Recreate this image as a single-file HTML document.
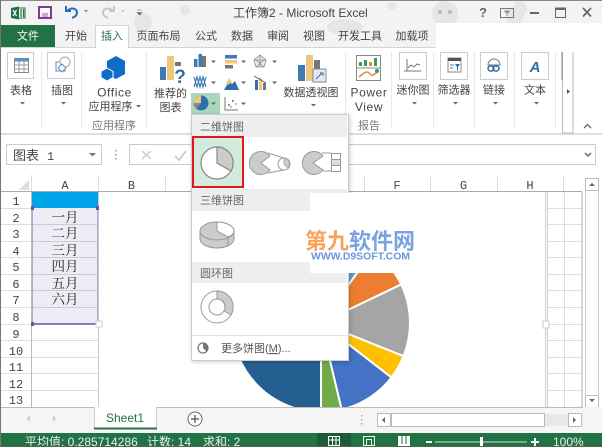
<!DOCTYPE html>
<html><head><meta charset="utf-8"><style>
html,body{margin:0;padding:0;background:#fff;overflow:hidden}
svg{display:block;font-family:"Liberation Sans","Noto Sans CJK SC",sans-serif;filter:blur(.35px)}
.t{font-size:11px;fill:#444;text-anchor:middle}
.l{font-size:12px;fill:#444;text-anchor:middle;letter-spacing:.6px}
.s{font-family:"Noto Serif CJK SC","Liberation Serif",serif;font-size:13.500px;fill:#222;text-anchor:middle}
.m{font-family:"Liberation Mono",monospace;font-size:12px;fill:#444;text-anchor:middle}
.h{font-size:11px;fill:#666}
.g{fill:#666}
</style></head><body>
<svg width="602" height="447" viewBox="0 0 602 447" xmlns="http://www.w3.org/2000/svg">
<rect width="602" height="447" fill="#fff"/>
<!-- title bar -->
<rect width="602" height="47" fill="#f3f3f3"/>
<g fill="#e6e6e6">
<circle cx="143" cy="22" r="9"/><circle cx="185" cy="10" r="5"/><ellipse cx="445" cy="14" rx="13" ry="13"/><ellipse cx="345" cy="27" rx="18" ry="8"/><circle cx="520" cy="8" r="7"/><circle cx="515" cy="16" r="9"/><circle cx="392" cy="6" r="4"/><circle cx="580" cy="35" r="6"/><circle cx="277" cy="36" r="5"/>
</g>
<g fill="#bbb"><circle cx="440" cy="12" r="2"/><circle cx="450" cy="12" r="2"/></g>
<rect x="436" y="23" width="166" height="24" fill="#fff"/>
<!-- QAT -->
<rect x="16" y="8" width="9" height="10" fill="#fff" stroke="#217346"/>
<path d="M11 8l8-1.500v13l-8-1.500z" fill="#217346"/>
<path d="M13 10l3.500 6M16.500 10l-3.500 6" stroke="#fff" stroke-width="1.200"/>
<path d="M21 9v8M23.500 9v8" stroke="#217346" stroke-width="1.300"/>
<rect x="39" y="7" width="12" height="11" fill="none" stroke="#7e3b92" stroke-width="2"/>
<rect x="41" y="8" width="8" height="3.500" fill="#fff"/><rect x="42" y="13" width="6" height="4" fill="#c9a9d3"/>
<path d="M66 6v5h5M67 11c4-4 10-3 10 2 0 3-3 4-5 5" fill="none" stroke="#2a6fb5" stroke-width="2"/>
<path d="M84 10h4l-2 2.500z" fill="#888"/>
<path d="M114 6v5h-5M113 11c-4-4-10-3-10 2 0 3 3 4 5 5" fill="none" stroke="#c4c4c4" stroke-width="1.800"/>
<path d="M121 10h4l-2 2.500z" fill="#ccc"/>
<path d="M137 10h5M137 12.500h5l-2.500 2.500z" fill="#666" stroke="#666" stroke-width=".6"/>
<text x="233" y="17" font-size="12" fill="#444">工作簿2 - Microsoft Excel</text>
<!-- window controls -->
<text x="479" y="17" font-size="13" fill="#666" font-weight="bold">?</text>
<rect x="500.500" y="8.500" width="13" height="9" fill="none" stroke="#777"/><path d="M504 11h6M507 11v5M505 13l2-2 2 2" fill="none" stroke="#777" stroke-width=".8"/>
<rect x="530" y="12" width="9" height="2" fill="#666"/>
<rect x="555.500" y="8.500" width="10" height="9" fill="none" stroke="#666"/><rect x="555" y="7.500" width="11" height="2.500" fill="#666"/>
<path d="M583 8l8 8.500M591 8l-8 8.500" stroke="#666" stroke-width="1.700"/>
<!-- tabs -->
<rect x="1" y="25" width="54" height="23" fill="#217346"/>
<text x="28" y="39.500" class="t" style="fill:#fff">文件</text>
<line x1="0" y1="47.500" x2="436" y2="47.500" stroke="#d4d4d4"/>
<path d="M95.500 48V25.500h33V48" fill="#fff" stroke="#d4d4d4"/>
<text x="76" y="39.500" class="t">开始</text>
<text x="112" y="39.500" class="t" style="fill:#217346">插入</text>
<text x="158.500" y="39.500" class="t">页面布局</text>
<text x="206" y="39.500" class="t">公式</text>
<text x="242" y="39.500" class="t">数据</text>
<text x="278" y="39.500" class="t">审阅</text>
<text x="314" y="39.500" class="t">视图</text>
<text x="360" y="39.500" class="t">开发工具</text>
<text x="412" y="39.500" class="t">加载项</text>
<!-- ribbon separators -->
<g stroke="#e8e8e8"><path d="M41.500 52v76M81.500 52v76M146.500 52v76M345.500 52v76M391.500 52v76M433.500 52v76M474.500 52v76M514.500 52v76M555.500 52v76"/></g>
<line x1="0" y1="134" x2="602" y2="134" stroke="#d4d4d4" stroke-width="1.500"/>
<!-- buttons -->
<g fill="#fff" stroke="#ccc">
<rect x="7.500" y="52.500" width="26" height="26"/><rect x="47.500" y="52.500" width="27" height="26"/>
<rect x="399.500" y="52.500" width="27" height="27"/><rect x="440.500" y="52.500" width="27" height="27"/><rect x="480.500" y="52.500" width="27" height="27"/><rect x="521.500" y="52.500" width="27" height="27"/>
</g>
<!-- table icon -->
<rect x="14.500" y="58.500" width="14" height="14" fill="#fff" stroke="#888"/><rect x="14" y="58" width="15" height="3.500" fill="#5b8fc7"/>
<path d="M14 65h15M14 69h15M19 61v11M24 61v11" stroke="#999"/>
<!-- illustration icon -->
<path d="M56 62h9v9h-9z" fill="#fff" stroke="#5b8fc7"/><circle cx="65" cy="62" r="5" fill="#fff" stroke="#c97"/><path d="M58 68l4-4 4 4-4 4z" fill="#fff" stroke="#5b8fc7"/>
<!-- office hex -->
<path d="M116 56l9 5v13l-9 5-9-5V61z" fill="#0f6cc7"/>
<path d="M107 68l6 3.500v6l-6 3.500-6-3.500v-6z" fill="#0f6cc7" stroke="#fff"/>
<!-- recommended -->
<rect x="160" y="67" width="6" height="13" fill="#3f7ab5"/><rect x="167" y="56" width="7" height="24" fill="#eec77c"/><rect x="175" y="62" width="6" height="4" fill="#777"/>
<text x="180" y="83" font-size="19" font-weight="bold" fill="#2f6ea8" text-anchor="middle">?</text>
<!-- small chart icons -->
<g>
<rect x="194" y="59" width="3.500" height="8" fill="#3f7ab5"/><rect x="198.500" y="54" width="3.500" height="13" fill="#3f7ab5"/><rect x="202" y="56" width="4" height="11" fill="#777"/>
<rect x="225" y="55" width="12" height="3.500" fill="#3f7ab5"/><rect x="225" y="60" width="12" height="3.500" fill="#eec77c"/><rect x="225" y="65" width="8" height="3.500" fill="#777"/>
<path d="M260 55l6 5-2 7h-8l-2-7zM260 55v12M254 60h12M256 67l8-7M264 67l-8-7" fill="#eee" stroke="#888" stroke-width=".8"/>
<path d="M194 87l3-10 3 10 3-10 3 10M194 77l3 10 3-10 3 10 3-10" fill="none" stroke="#3f7ab5" stroke-width="1.200"/>
<path d="M224 90l5-9 3 3 3-3 4 9z" fill="#2f6ea8"/><path d="M226 84l3-6 3 4-4 3z" fill="#eec77c"/>
<rect x="255" y="80" width="3" height="10" fill="#2f6ea8"/><rect x="259" y="78" width="3" height="12" fill="#eec77c"/><rect x="263" y="83" width="3" height="7" fill="#777"/><path d="M254 76l12 7" stroke="#555"/>
<rect x="191" y="93" width="29" height="21" fill="#a9d8bd"/>
<circle cx="201" cy="103" r="7.500" fill="#2f6ea8"/><path d="M201 103v-7.500a7.500 7.500 0 0 0-7.500 7.500z" fill="#eec77c"/><path d="M201 103h-7.500a7.500 7.500 0 0 0 3 6z" fill="#888"/>
<path d="M225 97v13h13" fill="none" stroke="#777"/>
<g fill="#3f7ab5"><circle cx="229" cy="105" r="1"/><circle cx="233" cy="101" r="1"/></g><g fill="#d9a53f"><circle cx="231" cy="107" r="1"/><circle cx="236" cy="104" r="1"/></g>
</g>
<!-- arrows -->
<g class="g">
<path d="M211 60.500h5l-2.500 2.500zM241 60.500h5l-2.500 2.500zM272 60.500h5l-2.500 2.500zM211 81.500h5l-2.500 2.500zM241 81.500h5l-2.500 2.500zM272 81.500h5l-2.500 2.500zM211 102.500h5l-2.500 2.500zM241 102.500h5l-2.500 2.500z"/>
<path d="M20 102h5l-2.500 2.500zM61 102h5l-2.500 2.500zM136 105h5l-2.500 2.500zM311 104h5l-2.500 2.500zM412 102h5l-2.500 2.500zM453 102h5l-2.500 2.500zM493 102h5l-2.500 2.500zM534 102h5l-2.500 2.500z"/>
</g>
<!-- labels -->
<text x="21" y="94" class="t">表格</text>
<text x="62" y="94" class="t">插图</text>
<text x="114.500" y="96.500" class="l">Office</text>
<text x="110.500" y="110" class="t">应用程序</text>
<text x="114" y="129" class="t" style="fill:#777">应用程序</text>
<text x="170.500" y="97" class="t">推荐的</text>
<text x="170.500" y="111" class="t">图表</text>
<text x="311" y="96" class="t">数据透视图</text>
<text x="369" y="96.500" class="l">Power</text>
<text x="369" y="111" class="l">View</text>
<text x="369" y="129" class="t" style="fill:#777">报告</text>
<text x="413" y="93.500" class="t">迷你图</text>
<text x="454" y="93.500" class="t">筛选器</text>
<text x="494" y="93.500" class="t">链接</text>
<text x="535" y="93.500" class="t">文本</text>
<!-- pivot chart -->
<rect x="298" y="65" width="7" height="16" fill="#3f7ab5"/><rect x="306" y="55" width="7" height="26" fill="#eec77c"/><rect x="314" y="60" width="6" height="9" fill="#777"/>
<rect x="313" y="69" width="13" height="13" fill="#e4eaf2" stroke="#888"/><path d="M316 79l6-6M320 73h3v3" stroke="#2f6ea8" fill="none"/>
<!-- power view -->
<rect x="356.500" y="55.500" width="24" height="25" fill="#fff" stroke="#888"/><path d="M356 68h25" stroke="#888"/>
<g fill="#3a9a58"><rect x="359" y="62" width="3" height="4"/><rect x="364" y="60" width="3" height="6"/><rect x="369" y="62" width="3" height="4" fill="#e08a3c"/><rect x="374" y="58" width="3" height="8"/></g>
<path d="M359 77c3-2 5-5 8-5s3 4 6 3 4-3 5-4" fill="none" stroke="#e08a3c" stroke-width="1.500"/><circle cx="377" cy="71" r="2" fill="#3a9a58"/>
<!-- sparkline -->
<path d="M407 59v12M404 71h17M408 68l3-3 3 2 3-3 3 1" fill="none" stroke="#777"/>
<!-- filter -->
<rect x="448" y="58" width="13" height="14" fill="#fff" stroke="#888"/><rect x="448" y="58" width="13" height="3" fill="#555"/><path d="M450 65h4M450 68h3" stroke="#3f7ab5"/><path d="M455 64h5l-2 3v3l-1 1v-4z" fill="#2f6ea8"/>
<!-- link -->
<path d="M488 65a6 6 0 0 1 12 0z" fill="none" stroke="#777"/>
<rect x="488" y="66" width="6" height="5" rx="2.500" fill="none" stroke="#2f6ea8" stroke-width="1.500"/><rect x="493" y="66" width="6" height="5" rx="2.500" fill="none" stroke="#2f6ea8" stroke-width="1.500"/>
<!-- text A -->
<text x="535" y="72" font-size="15" font-weight="bold" font-style="italic" fill="#2f6ea8" text-anchor="middle">A</text>
<!-- ribbon scroll -->
<path d="M562.500 52v81h10.500V52" fill="none" stroke="#bbb"/><line x1="562" y1="52" x2="562" y2="80" stroke="#888"/>
<path d="M567 89l3 2.500-3 2.500z" fill="#555"/>
<path d="M584 128l3.500-3.500 3.500 3.500" fill="none" stroke="#666" stroke-width="1.300"/>
<!-- formula bar -->
<rect x="6.500" y="144.500" width="95" height="20" fill="#fff" stroke="#ccc"/>
<text x="13" y="160" font-size="13" fill="#444">图表</text><text x="47" y="160" font-size="12" fill="#444" font-family="Liberation Mono">1</text>
<path d="M89 153h7l-3.500 3.500z" fill="#777"/>
<g fill="#999"><rect x="115" y="150" width="1.500" height="1.500"/><rect x="115" y="154" width="1.500" height="1.500"/><rect x="115" y="158" width="1.500" height="1.500"/></g>
<rect x="129.500" y="144.500" width="466" height="20" fill="#fff" stroke="#ccc"/>
<path d="M142 151l9 8M151 151l-9 8" stroke="#ccc" stroke-width="1.500"/>
<path d="M175 156l4 4 7-9" fill="none" stroke="#ccc" stroke-width="1.800"/>
<path d="M585 153l3 3 3-3" fill="none" stroke="#666" stroke-width="1.500"/>
<!-- col headers -->
<rect x="0" y="175" width="602" height="17" fill="#fff"/>
<path d="M29 180v10h-10z" fill="#ddd"/>
<g stroke="#ddd"><path d="M31.500 175v17M98.500 175v17M165.500 175v17M364.500 175v17M430.500 175v17M497.500 175v17M563.500 175v17"/></g>
<line x1="0" y1="191.500" x2="582" y2="191.500" stroke="#aaa" stroke-width="1"/>
<g>
<text x="65" y="189" class="m">A</text><text x="131.500" y="189" class="m">B</text><text x="397" y="189" class="m">F</text><text x="463.500" y="189" class="m">G</text><text x="530" y="189" class="m">H</text>
</g>
<!-- row headers -->
<g>
<text x="16" y="205" class="m">1</text><text x="16" y="222" class="m">2</text><text x="16" y="238" class="m">3</text><text x="16" y="255" class="m">4</text><text x="16" y="271" class="m">5</text><text x="16" y="288" class="m">6</text><text x="16" y="304" class="m">7</text><text x="16" y="321" class="m">8</text><text x="16" y="338" class="m">9</text><text x="16" y="355" class="m">10</text><text x="16" y="371" class="m">11</text><text x="16" y="388" class="m">12</text><text x="16" y="404" class="m">13</text>
</g>
<g stroke="#ddd"><path d="M0 208.500h32M0 224.500h32M0 241.500h32M0 257.500h32M0 274.500h32M0 290.500h32M0 307.500h32M0 324.500h32M0 340.500h98M0 357.500h98M0 373.500h98M0 390.500h98"/></g>
<line x1="31.500" y1="192" x2="31.500" y2="407" stroke="#bbb"/>
<!-- col A -->
<rect x="32" y="192" width="66" height="16" fill="#00a2e8"/>
<rect x="32" y="208" width="66" height="116" fill="#efecf6"/>
<g stroke="#cfc9d6"><path d="M32 224.500h66M32 241.500h66M32 257.500h66M32 274.500h66M32 290.500h66M32 307.500h66"/></g>
<line x1="98.500" y1="192" x2="98.500" y2="407" stroke="#ccc"/>
<line x1="32" y1="324" x2="98" y2="324" stroke="#6f4ea8" stroke-width="1.500"/>
<path d="M32.500 208v116" stroke="#b5a8cf"/><path d="M97.500 208v116" stroke="#b5a8cf"/>
<g fill="#6f4ea8"><rect x="31" y="206" width="3" height="4"/><rect x="96" y="206" width="3" height="4"/><rect x="31" y="322" width="3" height="4"/></g>
<rect x="96" y="321" width="6" height="6" fill="#fff" stroke="#ccc"/>
<text x="65" y="222" class="s">一月</text><text x="65" y="238" class="s">二月</text><text x="65" y="255" class="s">三月</text><text x="65" y="271" class="s">四月</text><text x="65" y="288" class="s">五月</text><text x="65" y="304" class="s">六月</text>
<!-- right grid -->
<g stroke="#ddd"><path d="M547 208.500h35M547 224.500h35M547 241.500h35M547 257.500h35M547 274.500h35M547 290.500h35M547 307.500h35M547 324.500h35M547 340.500h35M547 357.500h35M547 373.500h35M547 390.500h35M564.500 192v215"/></g>
<path d="M545.500 192v215M547.500 192v215" stroke="#ccc"/>
<line x1="582" y1="192" x2="582" y2="407" stroke="#bbb" stroke-width="1.200"/>
<rect x="543" y="321" width="6" height="7" fill="#fff" stroke="#ccc"/>
<!-- vertical scrollbar -->
<rect x="583" y="175" width="19" height="232" fill="#fff"/>
<rect x="585.500" y="178.500" width="13" height="12" fill="#fff" stroke="#bbb"/><path d="M589 186h6l-3-3z" fill="#666"/>
<path d="M585.500 191v204M598.500 191v204" stroke="#ccc"/>
<rect x="585.500" y="395.500" width="13" height="12" fill="#fff" stroke="#bbb"/><path d="M589 399h6l-3 3z" fill="#666"/>
<!-- pie -->
<clipPath id="pc"><rect x="99" y="192" width="446" height="215"/></clipPath>
<g clip-path="url(#pc)" stroke="#fff" stroke-width="2">
<path d="M321 323L321 412A89 89 0 1 1 321 234z" fill="#255e91"/>
<path d="M321 323L321 234A89 89 0 0 1 373 251z" fill="#5b9bd5"/>
<path d="M321 323L373 251A89 89 0 0 1 401.200 284.400z" fill="#ed7d31"/>
<path d="M321 323L401.200 284.400A89 89 0 0 1 403.500 356.200z" fill="#a5a5a5"/>
<path d="M321 323L403.500 356.200A89 89 0 0 1 391.400 377.500z" fill="#ffc000"/>
<path d="M321 323L391.400 377.500A89 89 0 0 1 341.600 409.600z" fill="#4472c4"/>
<path d="M321 323L341.600 409.600A89 89 0 0 1 321 412z" fill="#70ad47"/>
</g>
<!-- menu -->
<rect x="191.500" y="114.500" width="157" height="246" fill="#fff" stroke="#ccc" style="filter:drop-shadow(1px 1px 2px rgba(0,0,0,.2))"/>
<rect x="192" y="115" width="155" height="22" fill="#eee"/>
<rect x="192" y="189" width="155" height="22" fill="#eee"/>
<rect x="192" y="262" width="155" height="21" fill="#eee"/>
<text x="200" y="130.500" class="h">二维饼图</text><text x="200" y="204" class="h">三维饼图</text><text x="200" y="277" class="h">圆环图</text>
<rect x="193" y="137" width="50" height="50" fill="#d1ebdd" stroke="#e8141c" stroke-width="2"/>
<circle cx="217" cy="163" r="16" fill="#fff" stroke="#888" stroke-width="1.200"/>
<path d="M217 163V147A16 16 0 0 1 231 171z" fill="#ccc" stroke="#888" stroke-width="1.200"/>
<!-- pie of pie -->
<path d="M268 153l16 5M268 173l16-3" stroke="#999" fill="none"/>
<path d="M270 156l-9 7 9 7A11.500 11.500 0 1 1 270 156z" fill="#ccc" stroke="#999"/>
<circle cx="284" cy="164" r="6" fill="#fff" stroke="#999"/><path d="M284 158v6l4 4A6 6 0 0 0 284 158z" fill="#ccc" stroke="#999" stroke-width=".8"/>
<!-- bar of pie -->
<path d="M322 153h9M323 171h8" stroke="#999" fill="none"/>
<path d="M323 156l-10 7 10 7A11.500 11.500 0 1 1 323 156z" fill="#ccc" stroke="#999"/>
<rect x="331.500" y="153.500" width="9" height="18" fill="#fff" stroke="#999"/><rect x="331.500" y="159.500" width="9" height="6" fill="#ddd" stroke="#999"/>
<!-- 3d pie -->
<path d="M200 231v8c0 5 8 9 17 9s17-4 17-9v-8z" fill="#ccc" stroke="#999"/>
<ellipse cx="217" cy="231" rx="17" ry="9" fill="#ccc" stroke="#999"/>
<path d="M217 231v-9c9 0 17 4 17 9 0 2-2 5-6 6z" fill="#fff" stroke="#999"/><path d="M228 237v9" stroke="#999"/>
<!-- donut -->
<circle cx="217" cy="307" r="16" fill="#fff" stroke="#999"/>
<path d="M217 291A16 16 0 0 1 231 315L224 311A8 8 0 0 0 217 299z" fill="#ccc" stroke="#999"/>
<circle cx="217" cy="307" r="8" fill="#fff" stroke="#999"/>
<line x1="192" y1="335.500" x2="347" y2="335.500" stroke="#e4e4e4"/>
<circle cx="203" cy="348" r="5" fill="#fff" stroke="#777" stroke-width="1.200"/><path d="M203 348v-5a5 5 0 0 1 3.500 8.500z" fill="#777"/>
<text x="221" y="352" font-size="11" fill="#555">更多饼图(<tspan text-decoration="underline">M</tspan>)...</text>
<!-- watermark -->
<rect x="310" y="193" width="112" height="80" fill="#fff"/>
<text x="305" y="249" font-size="22" font-weight="bold" fill="#f8a25c">第九<tspan fill="#7ba3e0">软件网</tspan></text>
<text x="311" y="259.500" font-size="10" font-weight="bold" fill="#6b97da" textLength="99" lengthAdjust="spacingAndGlyphs">WWW.D9SOFT.COM</text>
<!-- bottom bars -->
<rect x="0" y="407" width="602" height="26" fill="#f5f5f5"/>
<line x1="0" y1="407.500" x2="583" y2="407.500" stroke="#bbb"/>
<path d="M30 415v7l-3-3.500zM53 415v7l3-3.500z" fill="#ccc"/>
<path d="M94.500 407v21h62v-21" fill="#fff" stroke="#ccc"/>
<rect x="94" y="427.500" width="63" height="2" fill="#217346"/>
<text x="125" y="422" font-size="12" fill="#217346" text-anchor="middle">Sheet1</text>
<circle cx="195" cy="419" r="7" fill="#fff" stroke="#666"/><path d="M191 419h8M195 415v8" stroke="#666" stroke-width="1.500"/>
<g fill="#aaa"><rect x="361" y="415" width="1.500" height="1.500"/><rect x="361" y="419" width="1.500" height="1.500"/><rect x="361" y="423" width="1.500" height="1.500"/></g>
<rect x="377.500" y="413.500" width="13" height="13" fill="#fff" stroke="#bbb"/><path d="M385 417v6l-3-3z" fill="#666"/>
<rect x="391.500" y="413.500" width="153" height="13" fill="#fff" stroke="#bbb"/>
<rect x="545" y="414" width="23" height="12" fill="#e8e8e8"/>
<rect x="568.500" y="413.500" width="13" height="13" fill="#fff" stroke="#bbb"/><path d="M573 417v6l3-3z" fill="#666"/>
<!-- status bar -->
<rect x="0" y="433" width="602" height="14" fill="#217346"/>
<rect x="317" y="433" width="34" height="13" fill="#1a5c38"/>
<text x="25" y="446" font-size="12" fill="#e8f0ea">平均值: 0.285714286</text>
<text x="147" y="446" font-size="12" fill="#e8f0ea">计数: 14</text>
<text x="203" y="446" font-size="12" fill="#e8f0ea">求和: 2</text>
<path d="M328.500 436.500h11v9h-11zM332.500 436.500v9M336 436.500v9M328.500 440h11" fill="none" stroke="#fff"/>
<rect x="363.500" y="436.500" width="11" height="9" fill="none" stroke="#dfe"/><rect x="366.500" y="439.500" width="5" height="6" fill="none" stroke="#dfe"/>
<path d="M398 436h12v10h-12z" fill="#fff"/><path d="M402 436v8M406 436v8" stroke="#217346"/>
<rect x="426" y="441" width="6" height="2" fill="#fff"/>
<rect x="435" y="441.500" width="92" height="1" fill="#cfe2d6"/>
<rect x="480" y="437" width="3" height="9" fill="#fff"/>
<path d="M531 442h8M535 438v8" stroke="#fff" stroke-width="2"/>
<text x="553" y="446" font-size="12" fill="#e8f0ea">100%</text>
<!-- window edges -->
<rect x="0" y="0" width="602" height="1" fill="#8a8a8a"/>
<rect x="0" y="0" width="1" height="447" fill="#777"/>
<rect x="0" y="446" width="602" height="1" fill="#5d5d5d"/>
</svg>
</body></html>
